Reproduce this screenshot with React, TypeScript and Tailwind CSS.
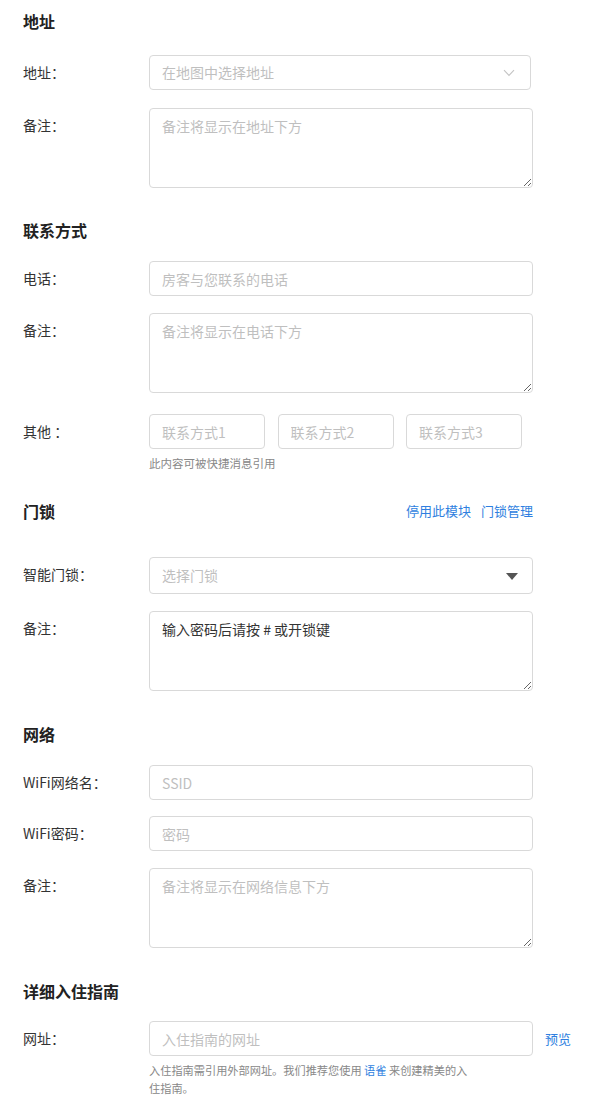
import React from "react";

const font = { fontFamily: '"Noto Sans CJK SC", "Noto Sans", sans-serif' };

const inputCls =
  "h-[35px] w-[384px] rounded-[4px] border border-[#d9d9d9] bg-white px-[12px] text-[14px] text-[#333] placeholder:text-[#bfbfbf] outline-none";
const areaCls =
  "block h-[80px] w-[384px] rounded-[4px] border border-[#d9d9d9] bg-white px-[12px] py-[6px] text-[14px] leading-[22px] text-[#333] placeholder:text-[#bfbfbf] outline-none";
const smallCls =
  "h-[35px] w-[116px] rounded-[4px] border border-[#d9d9d9] px-[12px] text-[14px] placeholder:text-[#bfbfbf] outline-none";

function Heading({ children, className = "", right }: { children: React.ReactNode; className?: string; right?: React.ReactNode }) {
  return (
    <div className={`flex h-[24px] w-[510px] items-center justify-between ${className}`}>
      <h2 className="text-[16px] font-bold leading-[24px] text-[#222]">{children}</h2>
      {right}
    </div>
  );
}

function Row({ label, children, className = "" }: { label: string; children: React.ReactNode; className?: string }) {
  return (
    <div className={`flex items-start ${className}`}>
      <div className="w-[126px] shrink-0 text-[14px] leading-[35px] text-[#333]">{label}</div>
      <div>{children}</div>
    </div>
  );
}

export default function App() {
  return (
    <div className="min-h-[1119px] w-[597px] bg-white px-[23px] pt-[9px]" style={font}>
      <Heading>地址</Heading>
      <Row label="地址：" className="mt-[22px]">
        <div className="relative flex h-[35px] w-[382px] items-center rounded-[4px] border border-[#d9d9d9] px-[12px] text-[14px] text-[#bfbfbf]">
          在地图中选择地址
          <svg className="absolute right-[15px] top-[13px]" width="12" height="8" viewBox="0 0 12 8" fill="none">
            <path d="M1 1.2 L6 6.4 L11 1.2" stroke="#c4c4c4" strokeWidth="1.1" />
          </svg>
        </div>
      </Row>
      <Row label="备注：" className="mt-[18px]">
        <textarea className={areaCls} placeholder="备注将显示在地址下方" />
      </Row>

      <Heading className="mt-[30px]">联系方式</Heading>
      <Row label="电话：" className="mt-[19px]">
        <input className={inputCls} placeholder="房客与您联系的电话" />
      </Row>
      <Row label="备注：" className="mt-[17px]">
        <textarea className={areaCls} placeholder="备注将显示在电话下方" />
      </Row>
      <Row label="其他 ：" className="mt-[21px]">
        <div className="flex gap-[12.5px]">
          <input className={smallCls} placeholder="联系方式1" />
          <input className={smallCls} placeholder="联系方式2" />
          <input className={smallCls} placeholder="联系方式3" />
        </div>
        <div className="mt-[5px] text-[11.5px] leading-[18px] text-[#888]">此内容可被快捷消息引用</div>
      </Row>

      <Heading
        className="mt-[27px]"
        right={
          <div className="flex gap-[10px] text-[13px] text-[#2f7fe0]">
            <span>停用此模块</span>
            <span>门锁管理</span>
          </div>
        }
      >
        门锁
      </Heading>
      <Row label="智能门锁：" className="mt-[34px]">
        <div className="relative flex h-[37px] w-[384px] items-center rounded-[4px] border border-[#d9d9d9] px-[12px] text-[14px] text-[#bfbfbf]">
          选择门锁
          <svg className="absolute right-[14px] top-[15px]" width="12" height="7" viewBox="0 0 12 7">
            <path d="M0 0 H12 L6 7 Z" fill="#555" />
          </svg>
        </div>
      </Row>
      <Row label="备注：" className="mt-[17px]">
        <textarea className={areaCls} defaultValue="输入密码后请按 # 或开锁键" />
      </Row>

      <Heading className="mt-[31px]">网络</Heading>
      <Row label="WiFi网络名：" className="mt-[19px]">
        <input className={inputCls} placeholder="SSID" />
      </Row>
      <Row label="WiFi密码：" className="mt-[16px]">
        <input className={inputCls} placeholder="密码" />
      </Row>
      <Row label="备注：" className="mt-[17px]">
        <textarea className={areaCls} placeholder="备注将显示在网络信息下方" />
      </Row>

      <Heading className="mt-[31px]">详细入住指南</Heading>
      <Row label="网址：" className="mt-[18px]">
        <div className="flex items-center">
          <input className={inputCls} placeholder="入住指南的网址" />
          <span className="ml-[12px] text-[13px] text-[#2f7fe0]">预览</span>
        </div>
        <div className="mt-[5px] w-[384px] text-[11.2px] leading-[18px] text-[#888]">
          入住指南需引用外部网址。我们推荐您使用 <span className="text-[#2f7fe0]">语雀</span> 来创建精美的入
          <br />
          住指南。
        </div>
      </Row>
    </div>
  );
}
